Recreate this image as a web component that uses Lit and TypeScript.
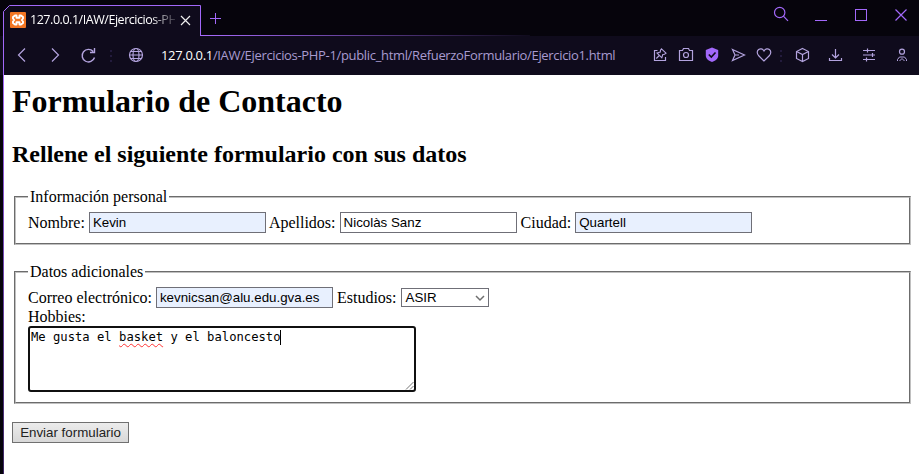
import { LitElement, html, css } from "lit";
import { customElement } from "lit/decorators.js";

@customElement("browser-chrome")
export class BrowserChrome extends LitElement {
  static styles = css`
    :host { display: block; height: 75px; background: #06040c; font-family: "Open Sans", "Noto Sans", sans-serif; }
    svg { display: block; fill: none; stroke: #b3a3de; stroke-width: 1.2; flex: none; }
    .strip { display: flex; height: 36px; position: relative; }
    .outline { position: absolute; left: 0; top: 0; stroke: #a268fa; stroke-width: 1; }
    .tab { position: relative; display: flex; align-items: center; width: 188px; height: 28px; margin: 6px 0 0 10px; }
    .title { margin-left: 4px; width: 145px; white-space: nowrap; font-size: 12.5px; line-height: 20px; letter-spacing: -0.46px; color: #fff;
      -webkit-mask-image: linear-gradient(90deg, #000 120px, transparent 150px); mask-image: linear-gradient(90deg, #000 120px, transparent 150px); }
    .x { stroke: #eee; margin-left: 5px; }
    .window { stroke: #a268fa; position: relative; }
    .plus { margin: 12px 0 0 11px; stroke-width: 1; }
    .controls { display: flex; margin-left: auto; }
    .bar { position: relative; display: flex; align-items: center; height: 39px; background: #0f0b1c; }
    .url { margin-left: 15px; width: 480px; white-space: nowrap; font-size: 13px; line-height: 20px; color: #a99bd0; letter-spacing: -0.33px; margin-top: -1px; }
    .host { color: #fff; }
    .tools { flex: none; }
  `;
  render() {
    return html`
      <div class="strip">
        <svg class="outline" width="919" height="36">
          <defs><linearGradient id="fade" gradientUnits="userSpaceOnUse" x1="200" y1="0" x2="530" y2="0"><stop offset="0" stop-color="#a96cff"/><stop offset="1" stop-color="#0f0b1c"/></linearGradient></defs>
          <path fill="#0f0b1c" stroke="none" d="M3 36V12L9 5H201V36Z"/>
          <path d="M3.500 36V11.500L9.500 5.500H200.500V35"/>
          <path fill="url(#fade)" stroke="none" d="M200 35H530V36H200Z"/>
        </svg>
        <div class="tab">
          <svg width="16" height="16" viewBox="0 0 16 16"><rect width="16" height="16" rx="1" fill="#f37623" stroke="none"/>
            <path stroke="#fff" stroke-width="1.9" stroke-linejoin="round" d="M5 3.500H6.500V5.800H9.500V3.500H11L13 5V6.500L11.800 8L13 9.500V11L11 12.500H9.500V10.200H6.500V12.500H5L3 11V9.500L4.200 8L3 6.500V5Z"/></svg>
          <span class="title">127.0.0.1/IAW/Ejercicios-PH</span>
          <svg class="x" width="11" height="11"><path d="M1 1L10 10M10 1L1 10"/></svg>
        </div>
        <svg class="window plus" width="13" height="13"><path d="M6.500 1V12M1 6.500H12"/></svg>
        <div class="controls">
          <svg class="window" width="149" height="36">
            <circle cx="9.700" cy="12.500" r="5.200"/><path d="M13.400 16.200L18 20.800"/>
            <path stroke-width="1" d="M45 20.500H57"/>
            <rect stroke-width="1" x="85.500" y="9.500" width="11" height="11"/><path d="M125.500 9.500L136.500 20.500M136.500 9.500L125.500 20.500"/>
          </svg>
        </div>
      </div>
      <div class="bar">
        <svg width="146" height="39">
          <path stroke="#a268fa" stroke-width="1" d="M3.500 0V39"/>
          <path d="M25 12.500L18.500 19L25 25.500M52 12.500L58.500 19L52 25.500"/>
          <path stroke-width="1.400" d="M93.200 15.500A6.300 6.300 0 1 0 94.500 21.500M94.500 12V16.500H90"/>
          <path stroke="#231b3d" stroke-width="2" stroke-dasharray="2 3" d="M111 14V27"/>
          <circle cx="136" cy="19" r="6.500"/><ellipse cx="136" cy="19" rx="3" ry="6.500"/><path d="M129.500 19H142.500M130.500 15.500H141.500M130.500 22.500H141.500"/>
        </svg>
        <span class="url"><span class="host">127.0.0.1</span>/IAW/Ejercicios-PHP-1/public_html/RefuerzoFormulario/Ejercicio1.html</span>
        <svg class="tools" width="278" height="39" viewBox="641 36 278 39">
          <path d="M657.500 50.500H654.500V60.500H665.500V57"/>
          <path stroke-width="1.100" d="M661.500 48.800L666 53.200L664.500 54.200L662.800 54.500L661.800 57.800L657 53L660.300 52L660.500 50.300ZM659.300 55.500L656.300 58.500"/>
          <path d="M679.500 50.500H682.500L683.500 48.500H688.500L689.500 50.500H692.500V60.500H679.500Z"/><circle cx="686" cy="55" r="2.500"/>
          <path fill="#a268fa" stroke="none" d="M712 47.500L718.200 50V56C718 59 715 61 712 62C709 61 706 59 705.800 56V50Z"/><path stroke="#0f0b1c" stroke-width="1.600" d="M708.800 54.500L711.300 57L715.500 52.500"/>
          <path d="M732.500 49.500L744.500 55L732.500 60.500L735 55ZM735 55H739"/>
          <path d="M764 61L758.500 55.500C754.500 50.500 761 46 764 51C767 46 773.500 50.500 769.500 55.500Z"/>
          <path stroke="#231b3d" stroke-width="2" stroke-dasharray="2 3" d="M781 50V63"/>
          <path d="M802.500 48.500L808.500 51.500V58.500L802.500 61.500L796.500 58.500V51.500ZM796.500 51.500L802.500 54.500L808.500 51.500M802.500 54.500V61.500"/>
          <path d="M835.500 49V57.500M832 54.500L835.500 58L839 54.500M829.500 58V60.500H841.500V58"/>
          <path d="M863 50.500H875M863 55H875M863 59.500H875M867.500 48.500V52.500M872.500 53V57M866.500 57.500V61.500"/>
          <circle cx="902" cy="51.700" r="2.500"/><path d="M897.500 61V59.500L899.500 57H904.500L906.500 59.500V61M899.500 61L902 58.500L904.500 61" stroke-width="1"/>
        </svg>
      </div>`;
  }
}

@customElement("contact-form")
export class ContactForm extends LitElement {
  static styles = css`
    :host { display: block; flex: 1; box-sizing: border-box; padding: 8px 8px 0; background: #fff; color: #000; font: 16px/18px "Liberation Serif", serif; }
    h1 { margin: 0; font-size: 32px; line-height: 37px; }
    h2 { margin: 21px 0 0; font-size: 24px; line-height: 27px; }
    .group { box-sizing: border-box; margin: 20px 0 0 2px; width: 897px; height: 57px; padding: 0 12px; border: 2px groove #c0c0c0; }
    .group + .group { margin-top: 18px; height: 141px; }
    legend { padding: 0 2px; height: 18px; }
    .row { display: flex; align-items: center; height: 21px; margin-top: 6px; white-space: nowrap; }
    .row label { margin-right: 4px; flex: none; }
    .row label:not(:first-child) { margin-left: 3px; }
    .row label.last { margin-left: 4px; }
    .field, .select { box-sizing: border-box; flex: none; border: 1px solid #6f6f77; width: 177px; height: 21px; padding: 0 3px; font: 13.333px/19px "Liberation Sans", sans-serif; }
    .filled { background: #e8f0fe; }
    .select { display: flex; align-items: center; justify-content: space-between; width: 88px; height: 19px; padding-left: 4px; }
    .select svg { fill: none; stroke: #6f6f6f; stroke-width: 1.5; }
    .hobbies { display: block; height: 18px; }
    .area { position: relative; box-sizing: border-box; width: 388px; height: 66px; border: 2px solid #101010; border-radius: 3px; font: 12.200px/15px "DejaVu Sans Mono", monospace; padding: 2px 0 0 1px; white-space: pre; }
    .wavy { text-decoration: underline wavy #f33 1px; text-underline-offset: 2px; text-decoration-skip-ink: none; }
    .caret { display: inline-block; width: 1px; height: 15px; margin-left: -1px; vertical-align: top; background: #000; }
    .grip { position: absolute; right: 0; bottom: 0; stroke: #777; }
    .send { display: block; box-sizing: border-box; margin: 18px 0 0; width: 117px; height: 21px; padding: 0; border: 1px solid #707070; background: linear-gradient(#ececec, #d8d8d8); color: #222; font: 13.333px/19px "Liberation Sans", sans-serif; }
  `;
  render() {
    return html`
      <h1>Formulario de Contacto</h1>
      <h2>Rellene el siguiente formulario con sus datos</h2>
      <fieldset class="group">
        <legend>Información personal</legend>
        <div class="row">
          <label>Nombre:</label><div class="field filled">Kevin</div>
          <label>Apellidos:</label><div class="field">Nicolàs Sanz</div>
          <label class="last">Ciudad:</label><div class="field filled">Quartell</div>
        </div>
      </fieldset>
      <fieldset class="group">
        <legend>Datos adicionales</legend>
        <div class="row">
          <label>Correo electrónico:</label><div class="field filled">kevnicsan@alu.edu.gva.es</div>
          <label class="last">Estudios:</label><div class="select">ASIR<svg width="10" height="8"><path d="M1 2L5 6L9 2"/></svg></div>
        </div>
        <label class="hobbies">Hobbies:</label>
        <div class="area">Me gusta el <span class="wavy">basket</span> y el baloncesto<span class="caret"></span><svg class="grip" width="9" height="9"><path d="M1 8.500L8.500 1M5 8.500L8.500 5"/></svg></div>
      </fieldset>
      <button class="send">Enviar formulario</button>`;
  }
}

@customElement("app-root")
export class AppRoot extends LitElement {
  static styles = css`
    :host { display: flex; flex-direction: column; width: 919px; height: 474px; overflow: hidden; background: #06040c; }
    .page { display: flex; flex: 1; box-sizing: border-box; margin-left: 3px; padding-left: 1px; background: linear-gradient(#a268fa, #3a2560); }
  `;
  render() {
    return html`<browser-chrome></browser-chrome><div class="page"><contact-form></contact-form></div>`;
  }
}
